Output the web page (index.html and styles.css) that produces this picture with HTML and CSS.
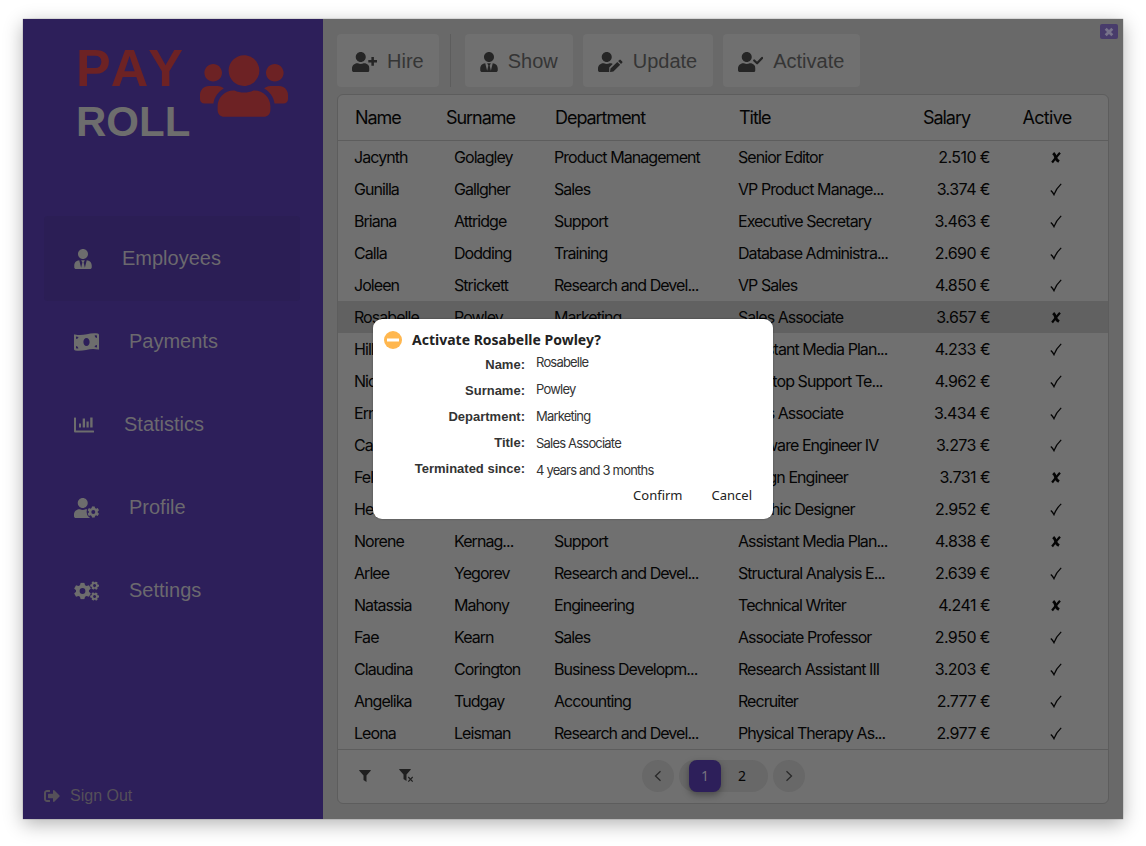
FILE: index.html
```html
<!DOCTYPE html>
<html lang="en">
<head>
<meta charset="utf-8">
<title>Payroll</title>
<link rel="stylesheet" href="styles.css">
</head>
<body>
<svg class="defs" width="0" height="0">
  <symbol id="user" viewBox="0 0 448 512"><path d="M224 256c70.7 0 128-57.3 128-128S294.7 0 224 0 96 57.3 96 128s57.3 128 128 128zm89.6 32h-16.7c-22.2 10.2-46.9 16-72.9 16s-50.6-5.8-72.9-16h-16.7C60.2 288 0 348.2 0 422.4V464c0 26.5 21.5 48 48 48h352c26.5 0 48-21.5 48-48v-41.6c0-74.2-60.2-134.4-134.4-134.4z"/></symbol>
  <symbol id="tie" viewBox="0 0 448 512"><path d="M224 256c70.7 0 128-57.3 128-128S294.7 0 224 0 96 57.3 96 128s57.3 128 128 128zm95.8 32.6L272 480l-32-136 32-56h-96l32 56-32 136-47.8-191.4C56.9 292 0 350.3 0 422.4V464c0 26.5 21.5 48 48 48h352c26.5 0 48-21.5 48-48v-41.6c0-72.1-56.9-130.4-128.2-133.8z"/></symbol>
  <symbol id="gear" viewBox="-50 -50 100 100"><path fill-rule="evenodd" d="M-11-49H11L15-34L24-29L38-34L49-15L38-5V5L49 15L38 34L24 29L15 34L11 49H-11L-15 34L-24 29L-38 34L-49 15L-38 5V-5L-49-15L-38-34L-24-29L-15-34ZM0-17A17 17 0 1 0 0 17A17 17 0 1 0 0-17Z"/></symbol>
  <symbol id="funnel" viewBox="0 0 12 12"><path d="M.4 0H11.6Q12 .3 11.7.8L7.5 5.6V12L4.5 10V5.6L.3.8Q0 .3.4 0Z"/></symbol>
  <symbol id="yes" viewBox="0 0 12 13"><path class="yes-line" d="M.8 7.400Q2.600 8.800 4 11.600Q6.200 5.600 11.200.9"/></symbol>
  <symbol id="no" viewBox="0 0 12 13"><path class="no-line" d="M3.200 2.200Q5.200 4 5.700 6.500T9 10.600"/><path class="no-line thin" d="M10 1.700Q6.500 5.500 2.100 11.500"/></symbol>
</svg>
<div class="window">
  <aside class="sidebar">
    <div class="brand">
      <div class="brand-text"><div class="pay">PAY</div><div class="roll">ROLL</div></div>
      <svg class="brand-icon" viewBox="0 32 640 448"><path d="M96 224c35.3 0 64-28.7 64-64s-28.7-64-64-64-64 28.7-64 64 28.7 64 64 64zm448 0c35.3 0 64-28.7 64-64s-28.7-64-64-64-64 28.7-64 64 28.7 64 64 64zm32 32h-64c-17.6 0-33.5 7.1-45.1 18.6 40.3 22.1 68.9 62 75.1 109.4h66c17.7 0 32-14.3 32-32v-32c0-35.3-28.7-64-64-64zm-256 0c61.9 0 112-50.1 112-112S381.9 32 320 32 208 82.1 208 144s50.1 112 112 112zm76.8 32h-8.3c-20.8 10-43.9 16-68.5 16s-47.6-6-68.5-16h-8.3C179.6 288 128 339.6 128 403.2V432c0 26.5 21.5 48 48 48h288c26.5 0 48-21.5 48-48v-28.8c0-63.6-51.6-115.2-115.2-115.2zm-223.7-13.4C161.5 263.1 145.6 256 128 256H64c-35.3 0-64 28.7-64 64v32c0 17.7 14.3 32 32 32h65.9c6.3-47.4 34.9-87.3 75.2-109.4z"/></svg>
    </div>
    <nav class="nav">
      <a class="nav-item active"><svg width="18" height="20"><use href="#tie"/></svg><span>Employees</span></a>
      <a class="nav-item"><svg width="25" height="20" viewBox="0 0 25 20"><path fill-rule="evenodd" d="M0 3.2Q0 2.1 1 2.4C9 4.8 15 .1 23.8 1.6Q25 1.9 25 3V16.8Q25 17.9 24 17.6C16 15.2 10 19.9 1.2 18.4Q0 18.1 0 17ZM12.5 6C10.6 6 9.4 7.8 9.4 10S10.600 14 12.500 14S15.600 12.200 15.600 10S14.400 6 12.500 6ZM2 4.500V7Q4.300 7 4.500 5ZM2 16.300Q3.200 16.600 4.400 16.500Q4.300 14.300 2 14ZM23 3.500Q21.800 3.300 20.600 3.400Q20.700 5.600 23 5.900ZM23 15.400V13Q20.800 13 20.500 15Z"/></svg><span>Payments</span></a>
      <a class="nav-item"><svg width="20" height="20" viewBox="0 0 20 20"><path d="M.5 2.500H1.500Q2 2.500 2 3V15.500H19.500Q20 15.500 20 16V17Q20 17.500 19.500 17.500H1Q0 17.500 0 16.500V3Q0 2.500.500 2.500ZM5 8.500H7V12.500H5ZM8.700 3.500H11V12.500H8.700ZM12.500 6.500H14.700V12.500H12.500ZM16.200 2.500H18.600V12.500H16.200Z"/></svg><span>Statistics</span></a>
      <a class="nav-item"><svg width="25" height="20" viewBox="0 0 25 20"><use href="#user" width="17.500" height="20"/><circle class="cut" cx="19.300" cy="14" r="6.700"/><use href="#gear" x="13.500" y="8.200" width="11.600" height="11.600"/></svg><span>Profile</span></a>
      <a class="nav-item"><svg width="25" height="20" viewBox="0 0 25 20"><use href="#gear" x="0" y="1.500" width="17" height="17"/><use href="#gear" x="16.200" y=".2" width="8.800" height="8.800" transform="rotate(30 20.600 4.600)"/><use href="#gear" x="16.200" y="11.100" width="8.800" height="8.800" transform="rotate(30 20.600 15.500)"/></svg><span>Settings</span></a>
    </nav>
    <a class="signout"><svg width="16" height="16" viewBox="0 0 512 512"><path d="M497 273L329 441c-15 15-41 4.500-41-17v-96H152c-13.300 0-24-10.700-24-24v-96c0-13.300 10.700-24 24-24h136V88c0-21.400 25.900-32 41-17l168 168c9.300 9.400 9.300 24.600 0 34zM192 436v-40c0-6.600-5.400-12-12-12H96c-17.700 0-32-14.300-32-32V160c0-17.700 14.300-32 32-32h84c6.600 0 12-5.400 12-12V76c0-6.600-5.400-12-12-12H96c-53 0-96 43-96 96v192c0 53 43 96 96 96h84c6.600 0 12-5.400 12-12z"/></svg><span>Sign Out</span></a>
  </aside>
  <main class="main">
    <div class="toolbar">
      <button class="tool"><svg width="25" height="20" viewBox="0 0 25 20"><use href="#user" width="17.500" height="20"/><path d="M19.400 5H21.900V8.100H25V10.600H21.900V13.700H19.400V10.600H16.300V8.100H19.400Z"/></svg>Hire</button>
      <span class="sep"></span>
      <button class="tool"><svg width="18" height="20"><use href="#tie"/></svg>Show</button>
      <button class="tool wide"><svg width="25" height="20" viewBox="0 0 25 20"><use href="#user" width="17.500" height="20"/><path class="cut" d="M11.200 20V15.500L18.500 8.200H25V20Z"/><path d="M12.500 20Q12 20 12.100 19.400L12.500 16.600L19.300 9.900L22.200 12.800L15.400 19.600ZM20.100 9.100L21.400 7.900Q22 7.300 22.700 7.900L24.200 9.400Q24.900 10.100 24.200 10.800L23 12Z"/></svg>Update</button>
      <button class="tool wide"><svg width="25" height="20" viewBox="0 0 25 20"><use href="#user" width="17.500" height="20"/><path class="check-line" d="M16.200 8.500L19.100 11.300L24.100 6"/></svg>Activate</button>
    </div>
    <section class="card">
      <div class="row head"><span>Name</span><span>Surname</span><span>Department</span><span>Title</span><span>Salary</span><span>Active</span></div>
      <div class="rows" id="rows"></div>
      <footer class="foot">
        <div class="filters"><svg width="12" height="12"><use href="#funnel"/></svg><svg width="15" height="14" viewBox="0 0 15 14"><use href="#funnel" width="12" height="12"/><path class="x-line" d="M9.300 8L13.700 12.600M13.700 8L9.300 12.600"/></svg></div>
        <div class="pager">
          <span class="arrow"><svg width="16" height="16" viewBox="0 0 16 16"><path d="M10.500 3.300L5.500 8L10.500 12.700"/></svg></span>
          <span class="pages"><b>1</b><i>2</i></span>
          <span class="arrow"><svg width="16" height="16" viewBox="0 0 16 16"><path d="M5.500 3.300L10.500 8L5.500 12.700"/></svg></span>
        </div>
      </footer>
    </section>
  </main>
  <span class="close"><svg width="10" height="10" viewBox="0 0 10 10"><path d="M1.700 1.700L8.300 8.300M8.300 1.700L1.700 8.300"/></svg></span>
  <div class="dialog">
    <div class="dialog-title"><svg width="18" height="18" viewBox="0 0 18 18"><circle cx="9" cy="9" r="9"/><rect x="3" y="7.500" width="12" height="3"/></svg>Activate Rosabelle Powley?</div>
    <div class="details">
      <div class="labels"><span>Name:</span><span>Surname:</span><span>Department:</span><span>Title:</span><span>Terminated since:</span></div>
      <div class="values"><span>Rosabelle</span><span>Powley</span><span>Marketing</span><span>Sales Associate</span><span>4 years and 3 months</span></div>
    </div>
    <div class="actions"><span>Confirm</span><span>Cancel</span></div>
  </div>
</div>
<script src="rows.js"></script>
</body>
</html>
```
FILE: rows.js
```js
const employees = [
  ["Jacynth", "Golagley", "Product Management", "Senior Editor", "2.510", 0],
  ["Gunilla", "Gallgher", "Sales", "VP Product Manage...", "3.374", 1],
  ["Briana", "Attridge", "Support", "Executive Secretary", "3.463", 1],
  ["Calla", "Dodding", "Training", "Database Administra...", "2.690", 1],
  ["Joleen", "Strickett", "Research and Devel...", "VP Sales", "4.850", 1],
  ["Rosabelle", "Powley", "Marketing", "Sales Associate", "3.657", 0],
  ["Hill", "", "", "Assistant Media Plan...", "4.233", 1],
  ["Nic", "", "", "Desktop Support Te...", "4.962", 1],
  ["Ern", "", "", "Sales Associate", "3.434", 1],
  ["Cal", "", "", "Software Engineer IV", "3.273", 1],
  ["Feli", "", "", "Design Engineer", "3.731", 0],
  ["Hen", "", "", "Graphic Designer", "2.952", 1],
  ["Norene", "Kernag...", "Support", "Assistant Media Plan...", "4.838", 0],
  ["Arlee", "Yegorev", "Research and Devel...", "Structural Analysis E...", "2.639", 1],
  ["Natassia", "Mahony", "Engineering", "Technical Writer", "4.241", 0],
  ["Fae", "Kearn", "Sales", "Associate Professor", "2.950", 1],
  ["Claudina", "Corington", "Business Developm...", "Research Assistant III", "3.203", 1],
  ["Angelika", "Tudgay", "Accounting", "Recruiter", "2.777", 1],
  ["Leona", "Leisman", "Research and Devel...", "Physical Therapy As...", "2.977", 1]
];
const list = document.getElementById("rows");
employees.forEach(([name, surname, dept, title, salary, active], index) => {
  const row = document.createElement("div");
  row.className = index === 5 ? "row selected" : "row";
  [name, surname, dept, title, salary + " €"].forEach(text => {
    const cell = document.createElement("span");
    cell.textContent = text;
    row.append(cell);
  });
  const mark = document.createElement("span");
  mark.className = "mark";
  mark.innerHTML = `<svg width="12" height="13"><use href="#${active ? "yes" : "no"}"/></svg>`;
  row.append(mark);
  list.append(row);
});
```
FILE: styles.css
```css
* { box-sizing: border-box; }
body { margin: 0; padding: 19px 23px; background: #fff; font-family: "Liberation Sans", Arial, sans-serif; height: 846px; overflow: hidden; }
.defs { position: absolute; }
svg { fill: currentColor; flex: none; display: block; }
.window { position: relative; display: flex; width: 1100px; height: 800px; background: #696969; box-shadow: 0 0 1px rgba(0,0,0,.5), 0 5px 18px rgba(0,0,0,.3); }

.sidebar { width: 300px; background: #2d1f5a; display: flex; flex-direction: column; padding: 20px 23px 14px 21px; }
.brand { display: flex; height: 177px; padding-left: 32px; }
.brand-text { width: 124px; font-weight: bold; font-kerning: none; }
.pay { font-size: 52px; line-height: 58px; color: #6d2224; }
.roll { font-size: 42px; line-height: 50px; color: #6d6d6d; }
.brand-icon { width: 88px; height: 62px; margin-top: 16px; color: #6d2224; }
.nav-item { display: flex; align-items: center; height: 83px; padding-left: 30px; gap: 30px; font-size: 20px; color: #6b696e; }
.nav-item.active { background: #2b1e55; border-radius: 4px; height: 85px; margin-bottom: -1px; }
.nav-item svg { color: #6d6d6d; }
.nav-item .cut { fill: #2d1f5a; }
.signout { display: flex; align-items: center; gap: 10px; font-size: 16px; line-height: 18px; color: #555059; margin-top: auto; }

.main { flex: 1; padding: 15px 14px 15px 14px; display: flex; flex-direction: column; min-width: 0; }
.toolbar { display: flex; height: 53px; margin-bottom: 7px; }
.tool { display: flex; align-items: center; gap: 10px; height: 53px; padding: 2px 15px 0; margin-right: 10px; border: 0; border-radius: 4px; background: #707070; color: #353535; font: 20px "Liberation Sans", Arial, sans-serif; white-space: nowrap; }
.tool.wide { padding-right: 16px; }
.tool svg { color: #252525; }
.tool .cut { fill: #707070; }
.check-line { fill: none; stroke: currentColor; stroke-width: 2.2; stroke-linecap: round; stroke-linejoin: round; }
.sep { width: 1px; background: #5d5d5d; margin: 0 14px 0 1px; }
.card { flex: 1; border: 1px solid #5d5d5d; border-radius: 6px; background: #707070; font-family: Inter, sans-serif; color: #050505; overflow: hidden; }
.row { display: grid; grid-template-columns: 100px 100px 184px 150px 102px 132px; padding-left: 16px; height: 32px; line-height: 32px; font-size: 16px; letter-spacing: -.94px; white-space: nowrap; }
.row span:nth-child(5) { text-align: right; letter-spacing: -.55px; }
.row .mark { display: grid; place-items: center; }
.yes-line { fill: none; stroke: currentColor; stroke-width: 1.3; }
.no-line { fill: none; stroke: currentColor; stroke-width: 2.9; }
.no-line.thin { stroke-width: 2.2; }
.row.head { grid-template-columns: 91px 109px 184px 150px 81px 154px; padding-left: 17px; height: 46px; line-height: 46px; font-size: 18px; letter-spacing: -1.05px; border-bottom: 1px solid #5d5d5d; }
.row.head span:nth-child(5) { letter-spacing: -1.05px; }
.row.head span:nth-child(6) { text-align: center; letter-spacing: -.7px; }
.row.selected { background: #616161; }
.foot { height: 54px; border-top: 1px solid #5d5d5d; display: flex; align-items: center; padding: 0 0 2px 21px; }
.filters { display: flex; align-items: center; gap: 28px; width: 283px; color: #202020; }
.x-line { fill: none; stroke: currentColor; stroke-width: 1.2; }
.pager { display: flex; gap: 5px; }
.arrow { width: 32px; height: 32px; border-radius: 50%; background: #686868; display: grid; place-items: center; }
.arrow path { fill: none; stroke: #292929; stroke-width: 1.3; }
.pages { display: flex; width: 89px; height: 32px; border-radius: 16px; background: #686868; padding-left: 10px; line-height: 32px; text-align: center; font-size: 14px; font-family: "Noto Sans", sans-serif; }
.pages b, .pages i { width: 32px; font-weight: normal; font-style: normal; }
.pages b { border-radius: 8px; background: #2d1f5a; color: #77727f; box-shadow: 0 3px 7px rgba(0,0,0,.35); }
.pages i { margin-left: 5px; }
.close { position: absolute; left: 1077px; top: 5px; width: 18px; height: 15px; background: #483c6b; border-radius: 2px; display: grid; place-items: center; }
.close path { stroke: #77738a; stroke-width: 2.8; }

.dialog { position: absolute; left: 350px; top: 300px; width: 400px; height: 200px; border-radius: 9px; background: #fff; padding: 11px; color: #333; box-shadow: 0 0 2px rgba(0,0,0,.4); }
.dialog-title { display: flex; align-items: center; gap: 10px; height: 20px; font: bold 14px/20px "Noto Sans", sans-serif; color: #222; }
.dialog-title svg { color: #ffb74f; }
.dialog-title rect { fill: #fff; }
.details { display: flex; gap: 11px; height: 135px; }
.labels, .values { display: flex; flex-direction: column; }
.labels { width: 141px; text-align: right; font-weight: bold; font-size: 13px; line-height: 26px; padding-top: 2px; white-space: nowrap; }
.values { font: 13px/27px Inter, sans-serif; letter-spacing: -.8px; margin-top: -1px; }
.actions { display: flex; justify-content: flex-end; gap: 29px; padding-right: 10px; font: 13px/20px "Noto Sans", sans-serif; color: #222; }
```
